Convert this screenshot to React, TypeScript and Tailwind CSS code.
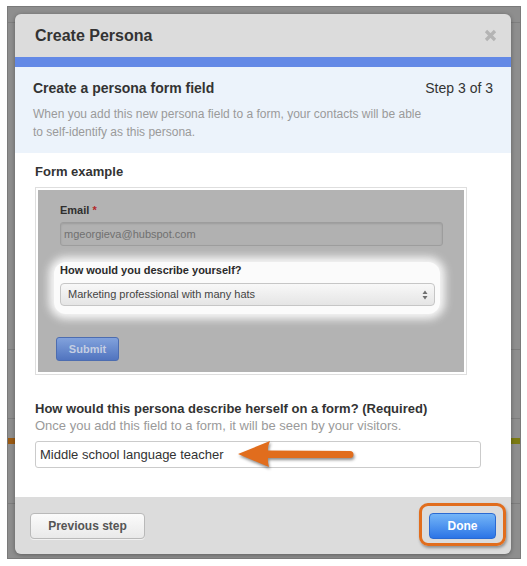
import React from 'react';

const ORANGE = '#e16d1d';

const CloseIcon = () => (
  <svg width="13" height="13" viewBox="0 0 13 13">
    <path d="M2 2 L11 11 M11 2 L2 11" stroke="#b4b4b4" strokeWidth="3.2" strokeLinecap="butt" />
  </svg>
);

const SelectArrows = () => (
  <svg width="6" height="10" viewBox="0 0 6 10">
    <path d="M3 0.5 L5.5 4 L0.5 4 Z" fill="#6f6f6f" />
    <path d="M3 9.5 L5.5 6 L0.5 6 Z" fill="#6f6f6f" />
  </svg>
);

// Skitch style annotation arrow, pointing left
const PointerArrow = () => (
  <svg
    width="122"
    height="34"
    viewBox="0 0 122 34"
    className="drop-shadow-[1px_2px_1.5px_rgba(0,0,0,0.45)]"
  >
    <path
      d="M2 15 L34 2 Q31.5 8 32 11.5 L114 12 A3.5 3.5 0 0 1 114 19 L32 19 Q31.5 23 33 28 Z"
      fill={ORANGE}
    />
  </svg>
);

export default function App() {
  return (
    <div className="w-[527px] h-[566px] bg-white pt-[6px] pl-[7px] font-['Liberation_Sans',Arial,sans-serif]">
      <div className="relative w-[514px] h-[553px] bg-[#8e8e8e] border border-[#7a7a7a] pl-[7px] pt-[7px]">
        {/* page behind the modal */}
        <div className="absolute left-0 right-0 top-[15px] h-px bg-[#7f7f7f]" />
        <div className="absolute left-0 right-0 top-[342px] h-px bg-[#7d7d7d]" />
        <div className="absolute left-0 right-0 top-[411px] h-px bg-[#7d7d7d]" />
        <div className="absolute left-0 w-[10px] top-[431px] h-[6px] bg-[#9b5a12]" />
        <div className="absolute right-0 w-[10px] top-[431px] h-[6px] bg-[#7b7a12]" />
        <div className="absolute left-0 right-0 top-[496px] h-px bg-[#7d7d7d]" />

        <div className="relative z-10 w-[496px] rounded-[6px] overflow-hidden shadow-[0_1px_4px_rgba(0,0,0,0.35)]">
          {/* header */}
          <div className="h-[43px] bg-[#dcdcdc] flex items-center justify-between pl-[20px] pr-[14px]">
            <h2 className="text-[16px] leading-[20px] font-bold text-[#333] pt-[1px]">Create Persona</h2>
            <CloseIcon />
          </div>
          <div className="h-[10px] bg-[#6389e6]" />

          {/* step intro */}
          <div className="h-[86px] bg-[#ecf3fb] pl-[18px] pr-[18px] pt-[11px]">
            <div className="flex justify-between items-start">
              <h3 className="text-[14px] leading-[20px] font-bold text-[#333]">Create a persona form field</h3>
              <span className="text-[14px] leading-[20px] text-[#333]">Step 3 of 3</span>
            </div>
            <p className="mt-[7px] max-w-[400px] text-[12px] leading-[18px] text-[#9a9a9a]">
              When you add this new persona field to a form, your contacts will be able to self-identify as this persona.
            </p>
          </div>

          {/* body */}
          <div className="bg-white pl-[20px] pt-[10px] pb-[29px]">
            <div className="text-[13px] leading-[18px] font-bold text-[#333]">Form example</div>

            <div className="mt-[6px] w-[432px] border border-[#dedede] p-[2px] bg-white">
              <div className="bg-[#b3b3b3] pl-[22px] pr-[21px] pt-[13px] pb-[11px]">
                <div className="text-[11px] leading-[14px] font-bold text-[#2f2f2f]">
                  Email <span className="text-[#b3282a]">*</span>
                </div>
                <div className="mt-[5px] h-[24px] rounded-[3px] border border-[#9d9d9d] bg-[#b1b1b1] shadow-[inset_0_1px_2px_rgba(0,0,0,0.12)] flex items-center pl-[3px] text-[11px] text-[#707070]">
                  mgeorgieva@hubspot.com
                </div>

                <div className="mt-[16px] -ml-[6px] mr-[3px] rounded-[12px] bg-[#fbfbfb] shadow-[0_0_8px_5px_rgba(251,251,251,0.95)] pl-[6px] pr-[5px] pt-[1px] pb-[8px]">
                  <div className="text-[11px] leading-[14px] font-bold text-[#2a2a2a]">How would you describe yourself?</div>
                  <div className="mt-[6px] h-[23px] rounded-[4px] border border-[#c6c6c6] bg-gradient-to-b from-[#f8f8f8] to-[#e5e5e5] flex items-center justify-between pl-[7px] pr-[6px] text-[11px] text-[#444]">
                    <span>Marketing professional with many hats</span>
                    <SelectArrows />
                  </div>
                </div>

                <button className="mt-[23px] -ml-[4px] w-[63px] h-[24px] rounded-[3px] border border-[#4d6db0] bg-gradient-to-b from-[#82a2dc] to-[#5174bf] text-[11px] font-bold text-[#c4cee2]">
                  Submit
                </button>
              </div>
            </div>

            <div className="mt-[25px] text-[13px] leading-[17px] font-bold text-[#333]">
              How would this persona describe herself on a form? (Required)
            </div>
            <div className="text-[13px] leading-[17px] text-[#9a9a9a]">
              Once you add this field to a form, it will be seen by your visitors.
            </div>

            <div className="relative mt-[7px] w-[446px] h-[27px] rounded-[3px] border border-[#cbcbcb] bg-white flex items-center pl-[4px] text-[13px] text-[#333]">
              Middle school language teacher
              <div className="absolute left-[200px] top-[-3px]">
                <PointerArrow />
              </div>
            </div>
          </div>

          {/* footer */}
          <div className="h-[57px] bg-[#dcdcdc] flex items-start justify-between px-[15px] pt-[16px]">
            <button className="w-[115px] h-[26px] rounded-[4px] border border-[#b9b9b9] bg-gradient-to-b from-[#fbfbfb] to-[#e9e9e9] text-[12px] font-bold text-[#555] shadow-[0_1px_0_rgba(255,255,255,0.6)]">
              Previous step
            </button>
            <div className="relative">
              <span className={`absolute -left-[10px] -right-[10px] -top-[10px] -bottom-[7px] rounded-[9px] border-[3px] border-[#e16d1d] shadow-[1px_2px_3px_rgba(0,0,0,0.35)]`} />
              <button className="relative w-[67px] h-[26px] rounded-[4px] border border-[#2a6ad2] bg-gradient-to-b from-[#74b5f7] to-[#2c74e6] text-[12px] font-bold text-white">
                Done
              </button>
            </div>
          </div>
        </div>
      </div>
    </div>
  );
}
